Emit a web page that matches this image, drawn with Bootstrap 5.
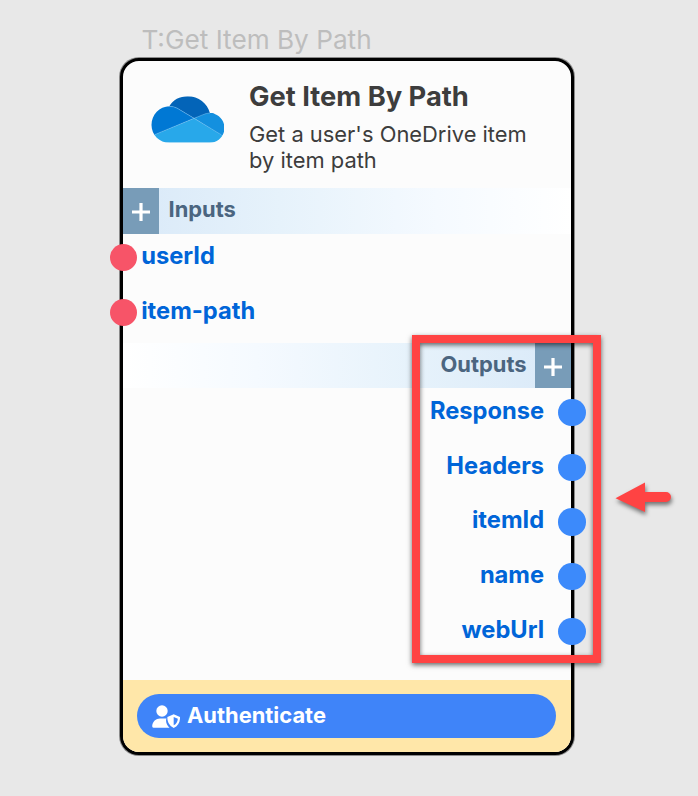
<!DOCTYPE html>
<html lang="en">
<head>
<meta charset="utf-8">
<meta name="viewport" content="width=device-width, initial-scale=1">
<title>Get Item By Path</title>
<link href="https://cdn.jsdelivr.net/npm/bootstrap@5.3.0/dist/css/bootstrap.min.css" rel="stylesheet">
<style>
body{background:#e8e8e8;font-family:Inter,"Liberation Sans",sans-serif;color:#3d3d3d;height:796px;overflow:hidden}
.stage{width:698px;height:796px;padding:22px 0 0 120px}
.node-tag{font-size:26.2px;line-height:36px;height:35.5px;color:#bdbdbd;padding-left:21.5px;white-space:nowrap}
.node-box{width:453.5px;height:697.5px;background:#fcfcfc;border:3px solid #000;border-radius:19px;box-shadow:0 0 0 1px rgba(0,0,0,.4)}
.node-head{height:127.5px;padding:21px 0 0 27.5px;gap:25px}
.cloud{width:73.5px;height:48px;margin-top:13px}
.node-title{font-size:27.3px;line-height:30px;font-weight:700;margin:0}
.node-desc{font-size:21.9px;line-height:26.2px;margin:9px 0 0;width:290px}
.band{height:45.5px;font-size:21.9px;font-weight:700;color:#4b6580;line-height:43px}
.band-in{background:linear-gradient(90deg,#d9e9f8,#e6f2fb 35%,#f5faff 70%,#fff)}
.band-out{background:linear-gradient(270deg,#d9e9f8,#e6f2fb 35%,#f5faff 70%,#fff)}
.band-in .caption-text{margin-left:9.5px}
.add{width:36px;height:45.5px;padding-top:2px;background:#789cb8}
.port{height:54.7px;font-size:23.7px;line-height:30px;font-weight:700;color:#0065d8;padding-top:7.5px}
.port-out{gap:14px}
.dot{width:27.4px;height:27.4px;border-radius:50%;margin-top:3px}
.dot-in{background:#f75468;margin-left:-13.2px}
.dot-out{background:#3c8afb;margin-right:-15px}
.node-foot{background:#ffe7a9;height:72.2px;padding:14.4px 14.4px 0 14px;border-radius:0 0 16px 16px}
.auth{background:#3f84f9;height:43.8px;font-size:21.9px;line-height:42px;font-weight:700;color:#fff;padding-left:15px}
.auth-text{margin:-3px 0 0 7px}
.frame-mark{left:412px;top:335px;width:189px;height:328px;border:8px solid #ff4343;box-shadow:0 2px 5px rgba(0,0,0,.6),inset 0 2px 5px rgba(0,0,0,.6)}
.arrow-mark{left:606px;top:474px;filter:drop-shadow(1px 3px 2px rgba(0,0,0,.5))}
</style>
</head>
<body>
<main class="stage position-relative">
  <div class="node-tag">T:Get Item By Path</div>
  <section class="node-box d-flex flex-column">
    <header class="node-head d-flex">
      <svg class="cloud flex-shrink-0" viewBox="0 0 74 48">
        <defs><clipPath id="cl"><path d="M18.500 11.200C22 4.500 29 1 37 1c10.800 0 19.800 7 22.300 17C67.500 18.300 74 25 74 33c0 8.300-6.700 15-15 15H18.700C8.500 48 .5 40 .5 30 .5 19.600 8.600 11.200 18.500 11.200Z"/></clipPath></defs>
        <g clip-path="url(#cl)">
          <path fill="#0364b8" d="M0 0h74v19H58.500L43.500 23.300 26 13Q22 11 16 11.300Z"/>
          <path fill="#0078d4" d="M0 11.200h18.500Q23 11.200 27 13.500L43.500 23.300 0 41.500Z"/>
          <path fill="#1490df" d="M43.500 23.300 51.500 20Q55 18 59.500 18H74v22.500h-3Z"/>
          <path fill="#28a8ea" d="M43.500 23.300 3.500 39.800 0 42v6h74v-5l-3-3Z"/>
          <path fill="none" stroke="#7fc2f0" stroke-width=".5" d="M18 11.200q5 0 8.500 2L71 40M3.500 39.800 51.500 20q4-2 8-2"/>
        </g>
      </svg>
      <div>
        <h1 class="node-title">Get Item By Path</h1>
        <p class="node-desc">Get a user's OneDrive item<br>by item path</p>
      </div>
    </header>
    <div class="band band-in d-flex">
      <span class="add d-flex align-items-center justify-content-center"><svg width="18" height="18" viewBox="0 0 18 18"><path d="M9 0v18M0 9h18" stroke="#fff" stroke-width="3.200"/></svg></span>
      <span class="caption-text">Inputs</span>
    </div>
    <div class="port d-flex"><i class="dot dot-in me-1"></i><span>userId</span></div>
    <div class="port d-flex"><i class="dot dot-in me-1"></i><span>item-path</span></div>
    <div class="band band-out d-flex justify-content-end">
      <span class="me-2">Outputs</span>
      <span class="add d-flex align-items-center justify-content-center"><svg width="18" height="18" viewBox="0 0 18 18"><path d="M9 0v18M0 9h18" stroke="#fff" stroke-width="3.200"/></svg></span>
    </div>
    <div class="port port-out d-flex justify-content-end"><span>Response</span><i class="dot dot-out"></i></div>
    <div class="port port-out d-flex justify-content-end"><span>Headers</span><i class="dot dot-out"></i></div>
    <div class="port port-out d-flex justify-content-end"><span>itemId</span><i class="dot dot-out"></i></div>
    <div class="port port-out d-flex justify-content-end"><span>name</span><i class="dot dot-out"></i></div>
    <div class="port port-out d-flex justify-content-end"><span>webUrl</span><i class="dot dot-out"></i></div>
    <footer class="node-foot mt-auto">
      <div class="auth d-flex align-items-center rounded-pill">
        <svg width="28" height="23" viewBox="0 0 28 23">
          <circle cx="10" cy="6" r="5.700" fill="#fff"/>
          <path fill="#fff" d="M8 13.500h6.500l-.5 1.500c0 3.500 1.500 6 3.500 7.800H1.500Q0 22.800.2 21C.5 16.500 4 13.500 8 13.500Z"/>
          <path fill="#fff" d="M21.700 9.300 28 12c.3 5-2 9-6.300 11-4.300-2-6.600-6-6.300-11Z"/>
          <path fill="#3f84f9" d="M21.700 12v8.300c2.700-1.400 4-3.700 4.100-6.600Z"/>
        </svg>
        <span class="auth-text">Authenticate</span>
      </div>
    </footer>
  </section>
  <div class="frame-mark position-absolute"></div>
  <svg class="arrow-mark position-absolute" width="74" height="52" viewBox="0 0 74 52"><path fill="#ff4343" d="M9.500 24.200 39 8.500V18h21a5 5 0 0 1 0 10H39v10Z"/></svg>
</main>
<script src="https://cdn.jsdelivr.net/npm/bootstrap@5.3.0/dist/js/bootstrap.bundle.min.js"></script>
</body>
</html>
